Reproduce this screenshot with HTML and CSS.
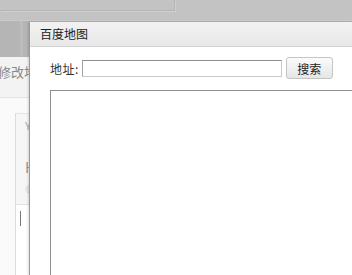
FILE: index.html
```html
<!DOCTYPE html>
<html lang="zh-CN">
<head>
    <meta charset="UTF-8">
    <meta name="viewport" content="width=device-width, initial-scale=1.0">
    <title>百度地图</title>
    <link rel="stylesheet" href="styles.css">
</head>
<body>
    <div class="page">
        <div class="topbar">
            <div class="tab"></div>
        </div>
        <div class="nav">
            <div class="nav-item"></div>
        </div>
        <div class="content">
            <div class="heading">修改地址</div>
            <div class="panel">
                <div class="panel-row">Y</div>
                <div class="panel-row big">H</div>
                <div class="panel-row small">©</div>
                <div class="panel-editor"><span class="caret"></span></div>
            </div>
        </div>
    </div>

    <div class="dialog">
        <div class="dialog-title">百度地图</div>
        <div class="dialog-body">
            <div class="search-row">
                <label for="addr">地址:</label>
                <input type="text" id="addr">
                <button>搜索</button>
            </div>
            <div class="map"></div>
        </div>
    </div>
</body>
</html>
```

FILE: styles.css
```css
body {
    margin: 0;
    width: 352px;
    height: 275px;
    overflow: hidden;
    position: relative;
    font-family: "Noto Sans CJK SC", "Liberation Sans", sans-serif;
    background-color: #f4f4f4;
}
.page {
    display: flex;
    flex-direction: column;
    height: 100%;
}
.topbar {
    flex-shrink: 0;
    height: 20px;
    background-color: #c3c3c3;
    border-bottom: 1px solid #cacaca;
}
.tab {
    width: 174px;
    height: 10px;
    border-right: 1px solid #b5b5b5;
    border-bottom: 1px solid #b5b5b5;
    box-shadow: 1px 1px 0 #d0d0d0;
}
.nav {
    flex-shrink: 0;
    height: 36px;
    background-color: #b5b5b5;
    display: flex;
}
.nav-item {
    width: 20px;
    border-right: 3px solid #bcbcbc;
}
.content {
    flex: 1;
    min-height: 0;
    display: flex;
    flex-direction: column;
    background-color: #fafafa;
}
.heading {
    flex-shrink: 0;
    height: 40px;
    line-height: 29px;
    text-indent: -2px;
    font-size: 13px;
    color: #888;
    background-color: #f3f3f3;
    border-bottom: 1px solid #e4e4e4;
    white-space: nowrap;
    overflow: hidden;
}
.panel {
    flex: 1;
    min-height: 0;
    margin: 15px 0 0 15px;
    border-left: 1px solid #dcdcdc;
    border-top: 1px solid #e4e4e4;
    background-color: #f6f6f6;
    display: flex;
    flex-direction: column;
}
.panel-row {
    padding-left: 9px;
    font-size: 11px;
    color: #aaa;
    height: 14px;
    line-height: 14px;
    margin-top: 4px;
}
.panel-row.big {
    margin-top: 28px;
    font-size: 14px;
    color: #999;
}
.panel-row.small {
    margin-top: 8px;
    font-size: 10px;
    color: #ccc;
}
.panel-editor {
    flex: 1;
    margin-top: 8px;
    border-top: 1px solid #e2e2e2;
    background-color: #fff;
    padding: 6px 0 0 4px;
}
.caret {
    display: block;
    width: 1px;
    height: 15px;
    background-color: #777;
}

/* dialog */
.dialog {
    position: absolute;
    left: 29px;
    top: 22px;
    width: 322px;
    height: 253px;
    display: flex;
    flex-direction: column;
    background: #fff;
    border-left: 1px solid #9a9a9a;
    box-shadow: -1px 0 2px rgba(0, 0, 0, 0.15);
}
.dialog-title {
    flex-shrink: 0;
    height: 24px;
    line-height: 24px;
    padding-left: 10px;
    font-size: 12px;
    color: #222;
    background: linear-gradient(#f2f2f2, #e8e8e8);
    border-bottom: 1px solid #d4d4d4;
}
.dialog-body {
    flex: 1;
    min-height: 0;
    display: flex;
    flex-direction: column;
    padding: 10px 0 0 20px;
}
.search-row {
    flex-shrink: 0;
    display: flex;
    align-items: center;
    height: 22px;
    font-size: 12px;
    color: #333;
}
.search-row label {
    margin-right: 3px;
    letter-spacing: 0.5px;
}
.search-row input {
    width: 200px;
    height: 17px;
    box-sizing: border-box;
    margin: 0;
    padding: 0 2px;
    border: 1px solid #c8c8c8;
    border-top-color: #8e8e8e;
    border-left-color: #a0a0a0;
}
.search-row button {
    margin-left: 4px;
    width: 47px;
    height: 22px;
    padding: 0;
    font-family: inherit;
    font-size: 12px;
    color: #222;
    border: 1px solid #c4c4c4;
    border-radius: 3px;
    background: linear-gradient(#fbfbfb, #e6e6e6);
}
.map {
    flex: 1;
    margin-top: 11px;
    border: 1px solid #8f8f8f;
    border-right: none;
    border-bottom: none;
}
```
